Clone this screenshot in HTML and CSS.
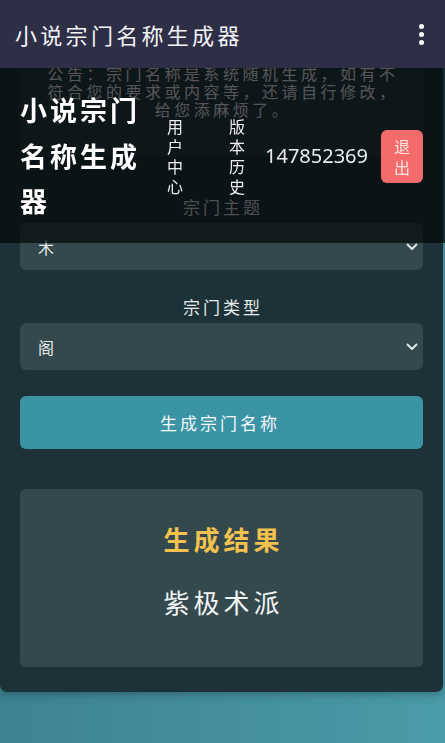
FILE: index.html
```html
<!DOCTYPE html>
<html lang="zh">
<head>
<meta charset="utf-8">
<title>小说宗门名称生成器</title>
<link rel="stylesheet" href="styles.css">
</head>
<body>
<header class="appbar">
  <span class="appbar-title">小说宗门名称生成器</span>
  <span class="kebab"><i></i><i></i><i></i></span>
</header>
<nav class="topnav">
  <div class="brand">小说宗门名称生成器</div>
  <a class="nav-link link-user">用户中心</a>
  <a class="nav-link link-ver">版本历史</a>
  <span class="phone">147852369</span>
  <button class="logout">退出</button>
</nav>
<main class="card">
  <div class="notice">公告：宗门名称是系统随机生成，如有不符合您的要求或内容等，还请自行修改，给您添麻烦了。</div>
  <div class="group">
    <label class="label">宗门主题</label>
    <div class="select"><span>木</span><svg class="chev" width="12" height="8" viewBox="0 0 12 8"><path d="M1.5 1.5 L6 6 L10.5 1.5" fill="none" stroke="#dfe6e8" stroke-width="2" stroke-linecap="round" stroke-linejoin="round"/></svg></div>
  </div>
  <div class="group">
    <label class="label">宗门类型</label>
    <div class="select"><span>阁</span><svg class="chev" width="12" height="8" viewBox="0 0 12 8"><path d="M1.5 1.5 L6 6 L10.5 1.5" fill="none" stroke="#dfe6e8" stroke-width="2" stroke-linecap="round" stroke-linejoin="round"/></svg></div>
  </div>
  <button class="generate">生成宗门名称</button>
  <section class="result">
    <h2 class="result-title">生成结果</h2>
    <p class="result-name">紫极术派</p>
  </section>
</main>
</body>
</html>
```
FILE: styles.css
```css
* { box-sizing: border-box; }
html, body { margin: 0; padding: 0; }
body {
  min-height: 743px;
  font-family: "Noto Sans CJK SC", "Noto Sans", sans-serif;
  background: linear-gradient(90deg, #3d8392 0%, #4a9ba9 100%);
  color: #fff;
}
.appbar {
  position: fixed;
  top: 0; left: 0; right: 0;
  height: 68px;
  background: #2e2f46;
  display: flex;
  align-items: center;
  justify-content: space-between;
  padding: 0 21px 0 15px;
  z-index: 10;
}
.appbar-title {
  font-size: 22px;
  letter-spacing: 3.3px;
  color: #f4f4f6;
  line-height: 30px;
}
.kebab {
  display: flex;
  flex-direction: column;
  gap: 3px;
}
.kebab i {
  display: block;
  width: 5px; height: 5px;
  border-radius: 50%;
  background: #fff;
}
.topnav {
  position: fixed;
  top: 68px; left: 0; right: 0;
  height: 175px;
  background: rgba(2, 4, 6, 0.68);
  display: flex;
  align-items: center;
  padding-left: 20px;
  z-index: 5;
}
.brand {
  width: 125px;
  font-size: 27px;
  font-weight: 700;
  letter-spacing: 3px;
  line-height: 45.5px;
  color: #fff;
}
.nav-link {
  width: 18px;
  font-size: 16px;
  letter-spacing: 2px;
  line-height: 20px;
  color: #eeeeee;
}
.link-user { margin-left: 22px; }
.link-ver { margin-left: 44px; }
.phone {
  margin-left: 18px;
  font-family: "Noto Sans", sans-serif;
  font-size: 20px;
  color: #ececec;
}
.logout {
  margin-left: 13px;
  margin-top: 2px;
  width: 42px;
  height: 53px;
  border: none;
  border-radius: 6px;
  background: #f36b6b;
  color: #ffe2e2;
  font-family: "Noto Sans CJK SC", sans-serif;
  font-size: 16px;
  line-height: 21px;
  padding: 0 12px;
}
.card {
  width: 443px;
  background: #1c3238;
  border-radius: 0 0 7px 7px;
  padding: 20px 20px 25px;
  box-shadow: 0 3px 8px rgba(0, 0, 0, 0.25);
}
.notice {
  background: rgba(255, 255, 255, 0.05);
  border-radius: 6px;
  padding: 44px 18px 39px 21px;
  font-size: 16px;
  letter-spacing: 3.5px;
  line-height: 18px;
  text-align: center;
  color: #ffffff;
  margin-bottom: 39px;
}
.group { margin-bottom: 26px; }
.label {
  display: block;
  text-align: center;
  font-size: 17px;
  letter-spacing: 3px;
  padding-left: 3px;
  line-height: 22px;
  color: #e6e9ea;
  margin-bottom: 5px;
}
.select {
  height: 47px;
  border-radius: 6px;
  background: #34484d;
  display: flex;
  align-items: center;
  justify-content: space-between;
  padding: 0 5px 0 18px;
  font-size: 16px;
  color: #e8ecec;
}
.chev { margin-right: 0; }
.generate {
  display: block;
  width: 100%;
  height: 53px;
  margin-top: 1px;
  border: none;
  border-radius: 6px;
  background: #3b93a6;
  color: #f3f8f9;
  font-family: "Noto Sans CJK SC", sans-serif;
  font-size: 17px;
  letter-spacing: 3px;
  padding-left: 3px;
}
.result {
  margin-top: 40px;
  height: 178px;
  border-radius: 6px;
  background: #33494e;
  padding-top: 32px;
  text-align: center;
}
.result-title {
  margin: 0;
  font-size: 26px;
  font-weight: 700;
  letter-spacing: 4px;
  padding-left: 4px;
  line-height: 36px;
  color: #f2c14e;
}
.result-name {
  margin: 27px 0 0;
  font-size: 26px;
  letter-spacing: 4px;
  padding-left: 4px;
  line-height: 36px;
  color: #f2f4f4;
}
```
